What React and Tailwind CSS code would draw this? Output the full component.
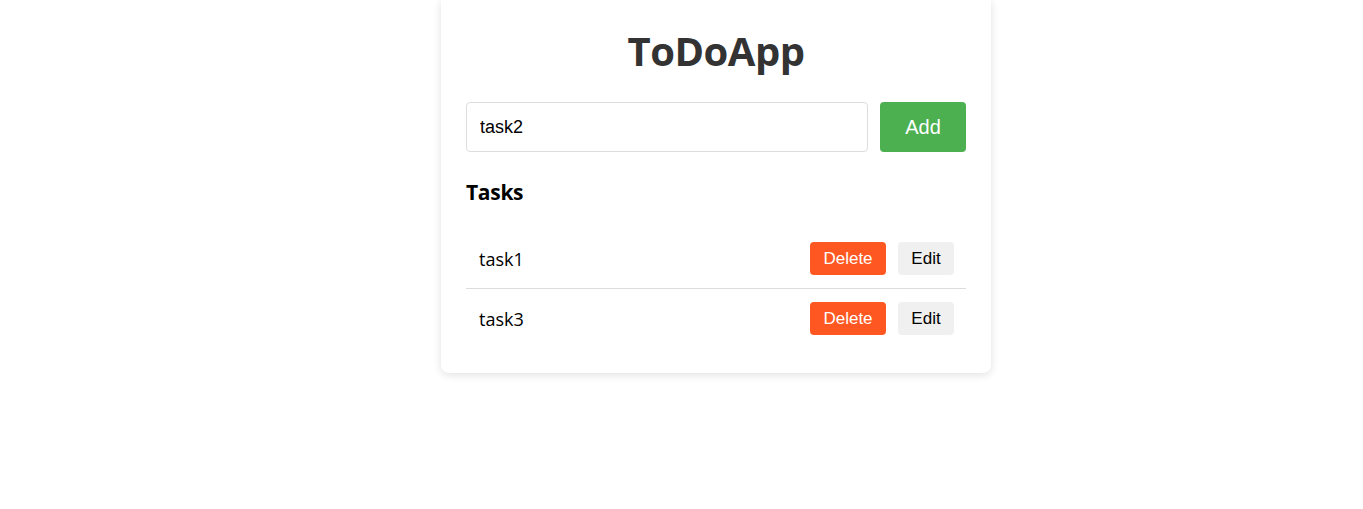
import React, { useState } from 'react';

const App = () => {
  const [task, setTask] = useState('task2');
  const [tasks, setTasks] = useState(['task1', 'task3']);

  const addTask = () => {
    if (!task.trim()) return;
    setTasks((prev) => [...prev, task]);
    setTask('');
  };

  const removeTask = (i) => {
    setTasks((prev) => prev.filter((_, idx) => idx !== i));
  };

  return (
    <div className="min-h-[509px] bg-white flex justify-center pl-[69px]">
      <div className="w-[550px] h-fit bg-white rounded-b-lg shadow-[0_2px_8px_rgba(0,0,0,0.12)] px-[25px] pt-[24px] pb-[25px]">
        <h1 className="text-center text-[40px] leading-[54px] font-bold text-[#333] font-['Open_Sans',sans-serif] tracking-[-0.5px]">
          ToDoApp
        </h1>

        {/* Input Row */}
        <div className="flex gap-3 mt-[24px]">
          <input
            type="text"
            value={task}
            onChange={(e) => setTask(e.target.value)}
            className="flex-1 h-[50px] border border-[#ddd] rounded px-[13px] text-[18px] text-black font-['Liberation_Sans',Arial,sans-serif] outline-none"
          />
          <button
            onClick={addTask}
            className="w-[86px] h-[50px] bg-[#4CAF50] text-white rounded text-[20px] font-['Liberation_Sans',Arial,sans-serif]"
          >
            Add
          </button>
        </div>

        <h3 className="mt-[27px] text-[21px] leading-[26px] font-bold text-black font-['Open_Sans',sans-serif] tracking-[-0.3px]">
          Tasks
        </h3>

        {/* Task List */}
        <ul className="mt-[24px]">
          {tasks.map((t, i) => (
            <li
              key={i}
              className={`flex items-center justify-between pl-[13px] pr-[12px] py-[13px] ${
                i < tasks.length - 1 ? 'border-b border-[#ddd]' : ''
              }`}
            >
              <span className="text-[18px] text-black font-['Open_Sans',sans-serif] pt-[2px]">{t}</span>
              <div className="flex gap-3">
                <button
                  onClick={() => removeTask(i)}
                  className="w-[76px] h-[33px] bg-[#FF5722] text-white rounded text-[17px] font-['Liberation_Sans',Arial,sans-serif]"
                >
                  Delete
                </button>
                <button className="w-[56px] h-[33px] bg-[#f0f0f0] text-black rounded text-[17px] font-['Liberation_Sans',Arial,sans-serif]">
                  Edit
                </button>
              </div>
            </li>
          ))}
        </ul>
      </div>
    </div>
  );
};

export default App;
